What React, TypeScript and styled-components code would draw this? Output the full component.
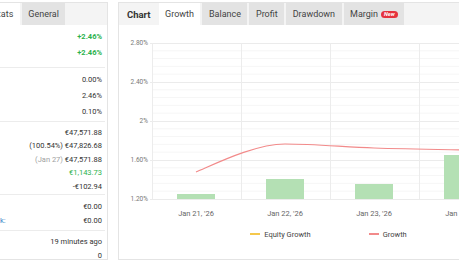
import React from "react";
import styled, { createGlobalStyle } from "styled-components";

const GlobalStyle = createGlobalStyle`
  html, body {
    margin: 0;
    padding: 0;
    background: #fff;
    overflow: hidden;
  }
  body {
    font-family: Roboto, "Liberation Sans", sans-serif;
    color: #333;
  }
`;

const Page = styled.div`
  display: flex;
  gap: 10px;
  padding-top: 2px;
  width: 539px;
`;

const Panel = styled.div<{ $width: number; $noLeft?: boolean }>`
  box-sizing: border-box;
  width: ${(p) => p.$width}px;
  height: 258px;
  border: 1px solid #e4e4e4;
  border-left: ${(p) => (p.$noLeft ? "none" : "1px solid #e4e4e4")};
  overflow: hidden;
  display: flex;
  flex-direction: column;
  flex-shrink: 0;
`;

const TabBar = styled.div<{ $shift?: number }>`
  display: flex;
  align-items: stretch;
  gap: 2px;
  height: 22px;
  background: #f4f4f4;
  margin-left: ${(p) => (p.$shift ? -p.$shift : 0)}px;
  flex-shrink: 0;
`;

const ChartTitle = styled.div`
  display: flex;
  align-items: center;
  padding: 0 6px 0 8px;
  font-size: 9.5px;
  font-weight: 700;
  color: #333;
`;

const Tab = styled.div<{ $active?: boolean }>`
  display: flex;
  align-items: center;
  gap: 3px;
  padding: 0 6.5px;
  font-size: 9px;
  color: #444;
  background: ${(p) => (p.$active ? "#fff" : "#e3e3e3")};
  white-space: nowrap;
`;

const NewBadge = styled.span`
  display: inline-block;
  background: #e5323e;
  color: #fff;
  font-size: 5.5px;
  font-weight: 700;
  font-style: italic;
  line-height: 7px;
  padding: 0 3px;
  border-radius: 4px;
`;

const Section = styled.div<{ $top: number; $bottom: number; $last?: boolean }>`
  padding: ${(p) => p.$top}px 0 ${(p) => p.$bottom}px;
  margin-right: 2px;
  border-bottom: ${(p) => (p.$last ? "none" : "1px solid #ececec")};
`;

const Row = styled.div<{ $h: number }>`
  display: flex;
  justify-content: space-between;
  align-items: center;
  height: ${(p) => p.$h}px;
  padding: 0 3px 0 0;
  font-size: 7.5px;
`;

const Label = styled.span`
  color: #3a86c8;
`;

const Value = styled.span<{ $tone?: "green" | "strong" }>`
  white-space: nowrap;
  color: ${(p) => (p.$tone ? "#2bb24c" : "#333")};
  font-weight: ${(p) => (p.$tone === "strong" ? 700 : 400)};
`;

const Muted = styled.span`
  color: #a0a0a0;
`;

const ChartSvg = styled.svg`
  display: block;
  flex-shrink: 0;
`;

const Legend = styled.div`
  display: flex;
  justify-content: center;
  align-items: center;
  gap: 58px;
  height: 24px;
  font-size: 7.5px;
  color: #444;
`;

const LegendItem = styled.div`
  display: flex;
  align-items: center;
  gap: 4px;
`;

const Swatch = styled.span<{ $color: string }>`
  width: 10px;
  height: 1.5px;
  background: ${(p) => p.$color};
`;

type Stat = { label?: string; value: React.ReactNode };

const sections: { top: number; bottom: number; h: number; rows: Stat[] }[] = [
  {
    top: 3,
    bottom: 7,
    h: 16,
    rows: [
      { value: <Value $tone="strong">+2.46%</Value> },
      { value: <Value $tone="strong">+2.46%</Value> },
    ],
  },
  {
    top: 3,
    bottom: 2,
    h: 16,
    rows: [
      { value: <Value>0.00%</Value> },
      { value: <Value>2.46%</Value> },
      { value: <Value>0.10%</Value> },
    ],
  },
  {
    top: 3.5,
    bottom: 1,
    h: 13.5,
    rows: [
      { value: <Value>€47,571.88</Value> },
      { value: <Value>(100.54%) €47,826.68</Value> },
      {
        value: (
          <Value>
            <Muted>(Jan 27)</Muted> €47,571.88
          </Value>
        ),
      },
      { value: <Value $tone="green">€1,143.73</Value> },
      { value: <Value>-€102.94</Value> },
    ],
  },
  {
    top: 4,
    bottom: 3,
    h: 14,
    rows: [{ value: <Value>€0.00</Value> }, { label: "k:", value: <Value>€0.00</Value> }],
  },
  {
    top: 3,
    bottom: 0,
    h: 14,
    rows: [{ value: <Value>19 minutes ago</Value> }, { value: <Value>0</Value> }],
  },
];

const chartTabs = ["Growth", "Balance", "Profit", "Drawdown"];

const yTicks = [
  { y: 43, label: "2.80%" },
  { y: 82, label: "2.40%" },
  { y: 121, label: "2%" },
  { y: 160, label: "1.60%" },
  { y: 199, label: "1.20%" },
];

const days = [
  { x: 196, label: "Jan 21, '26", top: 194 },
  { x: 285, label: "Jan 22, '26", top: 179 },
  { x: 374, label: "Jan 23, '26", top: 184 },
  { x: 463, label: "Jan 24, '26", top: 155 },
];

function GrowthChart() {
  const minor: number[] = [];
  for (let i = 0; i < 4; i++) {
    for (let k = 1; k < 5; k++) minor.push(43 + i * 39 + k * 7.8);
  }
  return (
    <ChartSvg width={419} height={197} viewBox="119 25 419 197">
      {minor.map((y) => (
        <line key={y} x1={152} x2={540} y1={y} y2={y} stroke="#f6f6f6" strokeWidth={1} />
      ))}
      {yTicks.map((t) => (
        <line key={t.y} x1={150} x2={540} y1={t.y + 0.5} y2={t.y + 0.5} stroke="#ebebeb" strokeWidth={1} />
      ))}
      {[152, 241, 330, 419, 508].map((x) => (
        <line key={x} x1={x + 0.5} x2={x + 0.5} y1={43} y2={199} stroke="#ececec" strokeWidth={1} />
      ))}
      {yTicks.map((t) => (
        <text
          key={t.label}
          x={148}
          y={t.y + 2.2}
          textAnchor="end"
          fontSize={6.5}
          fill="#777"
          fontFamily="Roboto, sans-serif"
        >
          {t.label}
        </text>
      ))}
      {days.map((d) => (
        <rect key={d.x} x={d.x - 19} y={d.top} width={38} height={199 - d.top} fill="#b4e0b4" />
      ))}
      <path
        d="M196 172 C215 164 255 144 285 144 C314.7 144 344.3 147 374 148 C403.7 149 448.2 149.7 463 150 L540 151"
        fill="none"
        stroke="#f28a8a"
        strokeWidth={1.2}
      />
      {days.map((d) => (
        <text
          key={d.label}
          x={d.x}
          y={215.5}
          textAnchor="middle"
          fontSize={7.5}
          fill="#666"
          fontFamily="Roboto, sans-serif"
        >
          {d.label}
        </text>
      ))}
    </ChartSvg>
  );
}

export default function App() {
  return (
    <>
      <GlobalStyle />
      <Page>
        <Panel $width={108} $noLeft>
          <TabBar $shift={14}>
            <Tab $active>Stats</Tab>
            <Tab>General</Tab>
          </TabBar>
          {sections.map((s, i) => (
            <Section key={i} $top={s.top} $bottom={s.bottom} $last={i === sections.length - 1}>
              {s.rows.map((r, j) => (
                <Row key={j} $h={s.h}>
                  <Label>{r.label ?? ""}</Label>
                  {r.value}
                </Row>
              ))}
            </Section>
          ))}
        </Panel>
        <Panel $width={421}>
          <TabBar>
            <ChartTitle>Chart</ChartTitle>
            {chartTabs.map((t, i) => (
              <Tab key={t} $active={i === 0}>
                {t}
              </Tab>
            ))}
            <Tab>
              Margin <NewBadge>New</NewBadge>
            </Tab>
          </TabBar>
          <GrowthChart />
          <Legend>
            <LegendItem>
              <Swatch $color="#f5c84c" />
              Equity Growth
            </LegendItem>
            <LegendItem>
              <Swatch $color="#f28a8a" />
              Growth
            </LegendItem>
          </Legend>
        </Panel>
      </Page>
    </>
  );
}
